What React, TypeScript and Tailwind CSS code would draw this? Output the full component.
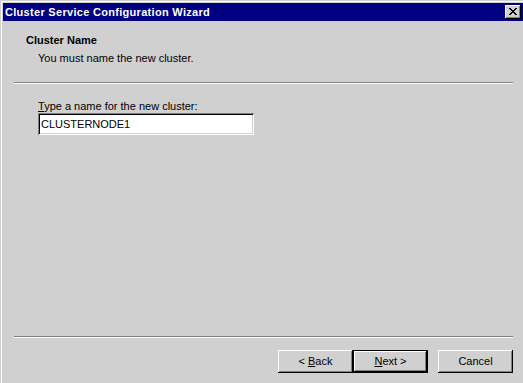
import React from "react";

const font = { fontFamily: '"Liberation Sans", Arial, sans-serif' };

const raised =
  "shadow-[inset_-1px_-1px_#000000,inset_1px_1px_#ffffff,inset_-2px_-2px_#808080]";
const raisedDefault =
  "shadow-[inset_0_0_0_1px_#000000,inset_-2px_-2px_#000000,inset_2px_2px_#ffffff,inset_-3px_-3px_#808080]";

function CloseGlyph() {
  const rows = [
    "XX....XX",
    ".XX..XX.",
    "..XXXX..",
    "...XX...",
    "..XXXX..",
    ".XX..XX.",
    "XX....XX",
  ];
  return (
    <svg width="8" height="7" viewBox="0 0 8 7" shapeRendering="crispEdges">
      {rows.flatMap((r, y) =>
        r.split("").map((c, x) =>
          c === "X" ? <rect key={`${x}-${y}`} x={x} y={y} width="1" height="1" fill="#000" /> : null
        )
      )}
    </svg>
  );
}

function Button({ children, isDefault }: { children: React.ReactNode; isDefault?: boolean }) {
  return (
    <button
      className={`w-[75px] h-[23px] bg-[#d0d0d0] text-[11px] text-black flex items-center justify-center ${
        isDefault ? raisedDefault : raised
      }`}
      style={font}
    >
      {children}
    </button>
  );
}

export default function App() {
  return (
    <div className="w-[523px] h-[383px] overflow-hidden bg-[#d0d0d0] pt-px pl-px" style={font}>
      <div className="h-full border-t border-l border-white pt-px pl-px">
        {/* title bar */}
        <div className="h-[18px] bg-[#000080] flex items-center justify-between pl-[2px] pr-[2px]">
          <span className="text-white font-bold text-[11px] leading-[13px] tracking-[0.3px]">
            Cluster Service Configuration Wizard
          </span>
          <div className={`w-[16px] h-[14px] bg-[#d0d0d0] flex items-center justify-center ${raised}`}>
            <div className="-mt-px -ml-px">
              <CloseGlyph />
            </div>
          </div>
        </div>

        {/* body */}
        <div className="h-[362px] flex flex-col text-black text-[11px] leading-[13px]">
          <div className="pt-[13px] pl-[23px] font-bold">Cluster Name</div>
          <div className="mt-[5px] pl-[35px]">You must name the new cluster.</div>

          <div className="mt-[17px] ml-[11px] w-[499px] border-t border-b border-t-[#808080] border-b-white" />

          <div className="mt-[16px] pl-[35px]">
            <u>T</u>ype a name for the new cluster:
          </div>
          <div className="mt-0 ml-[35px] w-[216px] h-[22px] bg-white flex items-center pl-[3px] shadow-[inset_1px_1px_#808080,inset_-1px_-1px_#ffffff,inset_2px_2px_#000000,inset_-2px_-2px_#d0d0d0]">
            CLUSTERNODE1
          </div>

          <div className="mt-auto ml-[11px] w-[499px] border-t border-b border-t-[#808080] border-b-white" />

          <div className="mt-[12px] mb-[10px] pl-[275px] flex">
            <Button>
              &lt; <u className="ml-[3px]">B</u>ack
            </Button>
            <Button isDefault>
              <u>N</u>ext &gt;
            </Button>
            <div className="w-[10px]" />
            <Button>Cancel</Button>
          </div>
        </div>
      </div>
    </div>
  );
}
